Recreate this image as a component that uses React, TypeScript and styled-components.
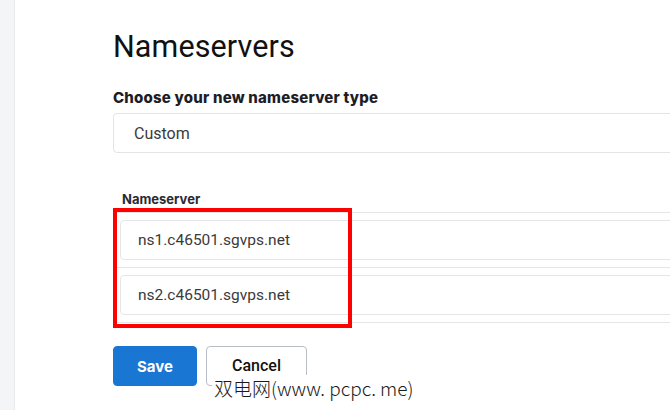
import React from "react";
import styled, { createGlobalStyle } from "styled-components";

const Global = createGlobalStyle`
  html, body { margin: 0; padding: 0; background: #ffffff; }
  body { width: 670px; height: 410px; overflow: hidden; font-family: Roboto, "Liberation Sans", sans-serif; }
  #root { width: 670px; height: 410px; }
`;

const Page = styled.div`
  position: relative;
  display: flex;
  width: 670px;
  height: 410px;
  overflow: hidden;
`;

const Sidebar = styled.div`
  flex: 0 0 15px;
  background: #f4f5f7;
  box-shadow: inset -1px 0 0 #e9eaee;
`;

const Main = styled.main`
  flex: 1;
  padding: 29px 0 0 98px;
  display: flex;
  flex-direction: column;
  min-width: 0;
`;

const Title = styled.h1`
  margin: 0;
  font-family: Roboto, sans-serif;
  font-weight: 400;
  font-size: 30.5px;
  line-height: 36px;
  color: #111;
  letter-spacing: 0.1px;
`;

const FieldLabel = styled.div`
  margin-top: 24px;
  font-family: Inter, sans-serif;
  font-weight: 800;
  font-size: 15px;
  line-height: 18px;
  color: #1d1d27;
  letter-spacing: 0.2px;
`;

const Select = styled.div`
  margin-top: 6px;
  width: 640px;
  height: 40px;
  box-sizing: border-box;
  border: 1px solid #e4e4e4;
  border-radius: 4px;
  display: flex;
  align-items: center;
  padding-left: 20px;
  font-family: Roboto, sans-serif;
  font-size: 16px;
  color: #3b3b3b;
`;

const Table = styled.div`
  margin-top: 38px;
  width: 640px;
  display: flex;
  flex-direction: column;
`;

const HeaderCell = styled.div`
  padding: 0 0 5px 9px;
  font-family: Inter, sans-serif;
  font-weight: 700;
  font-size: 13px;
  line-height: 16px;
  color: #2a2a33;
  border-bottom: 1px solid #e6e6e6;
`;

const Row = styled.div`
  padding: 7px 0 7px 7px;
  border-bottom: 1px solid #e6e6e6;
`;

const Input = styled.div`
  height: 40px;
  box-sizing: border-box;
  border: 1px solid #e6e6e6;
  border-radius: 4px;
  display: flex;
  align-items: center;
  padding-left: 17px;
  font-family: Roboto, sans-serif;
  font-size: 15.5px;
  color: #3a3a3a;
`;

const Actions = styled.div`
  margin-top: 23px;
  display: flex;
  gap: 9px;
`;

const Button = styled.button<{ $primary?: boolean }>`
  height: 40px;
  box-sizing: border-box;
  border-radius: 4px;
  padding: 0;
  width: ${(p) => (p.$primary ? "84px" : "101px")};
  border: 1px solid ${(p) => (p.$primary ? "#1976d2" : "#b7bec6")};
  background: ${(p) => (p.$primary ? "#1976d2" : "#ffffff")};
  color: ${(p) => (p.$primary ? "#ffffff" : "#111111")};
  font-family: ${(p) => (p.$primary ? "Inter, sans-serif" : "Roboto, sans-serif")};
  font-weight: ${(p) => (p.$primary ? 700 : 500)};
  font-size: ${(p) => (p.$primary ? "15px" : "16px")};
  line-height: 1;
`;

const Highlight = styled.div`
  position: absolute;
  left: 113px;
  top: 208px;
  width: 239px;
  height: 120px;
  box-sizing: border-box;
  border: 4px solid #ff0000;
  pointer-events: none;
`;

const Watermark = styled.div`
  position: absolute;
  left: 212px;
  top: 375px;
  padding: 0 2px;
  background: #ffffff;
  font-family: "Noto Sans CJK SC", "DejaVu Sans", sans-serif;
  font-weight: 300;
  font-size: 19px;
  line-height: 26px;
  color: #1a1a1a;
  letter-spacing: 0;
  white-space: nowrap;
`;

export default function App() {
  const servers = ["ns1.c46501.sgvps.net", "ns2.c46501.sgvps.net"];
  return (
    <>
      <Global />
      <Page>
        <Sidebar />
        <Main>
          <Title>Nameservers</Title>
          <FieldLabel>Choose your new nameserver type</FieldLabel>
          <Select>Custom</Select>
          <Table>
            <HeaderCell>Nameserver</HeaderCell>
            {servers.map((s) => (
              <Row key={s}>
                <Input>{s}</Input>
              </Row>
            ))}
          </Table>
          <Actions>
            <Button $primary>Save</Button>
            <Button>Cancel</Button>
          </Actions>
        </Main>
        <Highlight />
        <Watermark>双电网(www. pcpc. me)</Watermark>
      </Page>
    </>
  );
}
